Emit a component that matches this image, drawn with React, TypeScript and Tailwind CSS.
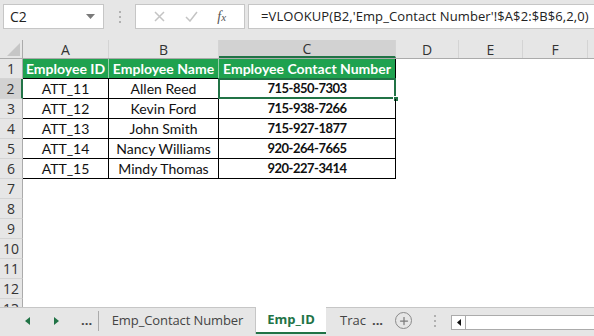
import { Plus } from 'lucide-react'

const cols = [
	{ key: 'A', w: 'w-[86px]' },
	{ key: 'B', w: 'w-[110px]' },
	{ key: 'C', w: 'w-[177px]' },
	{ key: 'D', w: 'w-[63px]' },
	{ key: 'E', w: 'w-[64px]' },
	{ key: 'F', w: 'w-[65px]' },
]

const rows = [
	['ATT_11', 'Allen Reed', '715-850-7303'],
	['ATT_12', 'Kevin Ford', '715-938-7266'],
	['ATT_13', 'John Smith', '715-927-1877'],
	['ATT_14', 'Nancy Williams', '920-264-7665'],
	['ATT_15', 'Mindy Thomas', '920-227-3414'],
]

const ui = { fontFamily: '"Open Sans", "Noto Sans", sans-serif' }
const cell = { fontFamily: 'Lato, "Noto Sans", sans-serif' }

function Dots() {
	return (
		<div className="flex flex-col gap-[3px]">
			<span className="w-[2px] h-[2px] bg-[#b0b0b0]" />
			<span className="w-[2px] h-[2px] bg-[#b0b0b0]" />
			<span className="w-[2px] h-[2px] bg-[#b0b0b0]" />
		</div>
	)
}

function TopBar() {
	return (
		<div className="h-[40px] bg-[#e6e6e6] flex items-start pt-[4px] pl-[3px] shrink-0" style={ui}>
			{/* Name box */}
			<div className="w-[101px] h-[25px] bg-white border border-[#c6c6c6] flex items-center justify-between pl-[6px] pr-[8px]">
				<span className="text-[14px] text-[#222]">C2</span>
				<svg width="9" height="5" viewBox="0 0 9 5">
					<path d="M0 0h9L4.5 5z" fill="#7a7a7a" />
				</svg>
			</div>
			<div className="w-[31px] h-[25px] flex items-center justify-center">
				<Dots />
			</div>
			{/* Formula buttons */}
			<div className="w-[110px] h-[25px] bg-white border border-[#c6c6c6] flex items-center justify-around px-[8px]">
				<svg width="11" height="11" viewBox="0 0 11 11">
					<path d="M1 1l9 9M10 1l-9 9" stroke="#c4c4c4" strokeWidth="1.5" />
				</svg>
				<svg width="13" height="11" viewBox="0 0 13 11">
					<path d="M1 6l4 4 7-9" stroke="#c4c4c4" strokeWidth="1.5" fill="none" />
				</svg>
				<span className="text-[14px] italic text-[#555]" style={{ fontFamily: '"Liberation Serif", serif' }}>
					f<span className="text-[11px]">x</span>
				</span>
			</div>
			{/* Formula box */}
			<div className="ml-[3px] flex-1 h-[25px] bg-white border border-[#c6c6c6] border-r-0 flex items-center pl-[12px] overflow-hidden whitespace-nowrap">
				<span className="text-[13px] text-[#222] tracking-[0.1px]">
					=VLOOKUP(B2,'Emp_Contact Number'!$A$2:$B$6,2,0)
				</span>
			</div>
		</div>
	)
}

function ColumnHeader() {
	return (
		<div className="h-[19px] flex shrink-0 bg-[#e6e6e6] border-b border-[#ababab]" style={ui}>
			<div className="w-[23px] border-r border-[#ababab] relative">
				<svg className="absolute right-[2px] bottom-[2px]" width="13" height="13" viewBox="0 0 13 13">
					<path d="M13 0v13H0z" fill="#c6c6c6" />
				</svg>
			</div>
			{cols.map((c) => (
				<div
					key={c.key}
					className={`${c.w} shrink-0 border-r border-[#d4d4d4] flex items-center justify-center text-[14px] text-[#333] ${
						c.key === 'C' ? 'bg-[#d2d2d2] border-b-2 border-b-[#217346]' : ''
					}`}
				>
					{c.key}
				</div>
			))}
			<div className="flex-1" />
		</div>
	)
}

function RowHead({ n, active }: { n: number; active?: boolean }) {
	return (
		<div
			className={`w-[23px] shrink-0 flex items-center justify-center text-[14px] text-[#333] border-b border-[#d4d4d4] ${
				active ? 'bg-[#d2d2d2] border-r-2 border-r-[#217346]' : 'bg-[#e6e6e6] border-r border-r-[#ababab]'
			}`}
			style={ui}
		>
			{n}
		</div>
	)
}

function Sheet() {
	return (
		<div className="flex-1 flex flex-col overflow-hidden bg-white">
			<ColumnHeader />
			{/* header row */}
			<div className="h-[20px] flex shrink-0">
				<RowHead n={1} />
				<div className="flex border-b border-black" style={cell}>
					{['Employee ID', 'Employee Name', 'Employee Contact Number'].map((t, i) => (
						<div
							key={t}
							className={`${cols[i].w} shrink-0 bg-[#1fa24f] text-white font-bold text-[14px] flex items-center justify-center whitespace-nowrap ${
								i < 2 ? 'border-r border-[#8fd1a7]' : 'border-r border-black'
							}`}
						>
							{t}
						</div>
					))}
				</div>
			</div>
			{rows.map((r, ri) => (
				<div key={r[0]} className="h-[20px] flex shrink-0">
					<RowHead n={ri + 2} active={ri === 0} />
					<div className="flex border-b border-black text-[14px] text-[#111]" style={cell}>
						<div className={`${cols[0].w} shrink-0 border-r border-black flex items-center justify-center`}>{r[0]}</div>
						<div className={`${cols[1].w} shrink-0 border-r border-black flex items-center justify-center`}>{r[1]}</div>
						<div
							className={`${cols[2].w} shrink-0 border-r border-black flex items-center justify-center font-bold text-[13px] tracking-[-0.5px] relative`}
						>
							{r[2]}
							{ri === 0 && (
								<>
									<div className="absolute inset-[-1px] border-2 border-[#217346]" />
									<div className="absolute right-[-4px] bottom-[-4px] w-[6px] h-[6px] bg-[#217346] border border-white" />
								</>
							)}
						</div>
					</div>
				</div>
			))}
			{[7, 8, 9, 10, 11, 12, 13].map((n) => (
				<div key={n} className="h-[20px] flex shrink-0">
					<RowHead n={n} />
				</div>
			))}
		</div>
	)
}

function TabBar() {
	return (
		<div className="h-[29px] shrink-0 bg-[#e6e6e6] border-t border-[#c6c6c6] flex items-start" style={ui}>
			<div className="w-[100px] h-[25px] flex items-center">
				<svg className="ml-[25px]" width="5" height="8" viewBox="0 0 5 8">
					<path d="M5 0v8L0 4z" fill="#217346" />
				</svg>
				<svg className="ml-[24px]" width="5" height="8" viewBox="0 0 5 8">
					<path d="M0 0v8l5-4z" fill="#217346" />
				</svg>
				<span className="ml-[22px] text-[13px] font-bold text-[#444] leading-none">...</span>
				<div className="ml-[6px] w-px h-[20px] bg-[#ababab]" />
			</div>
			<div className="w-[155px] h-[25px] flex items-center justify-center text-[13px] text-[#444] tracking-[-0.1px]">
				Emp_Contact Number
			</div>
			<div className="w-[71px] h-[27px] -mt-px bg-white flex flex-col items-center border-l border-[#c6c6c6]">
				<span className="flex-1 flex items-center text-[13px] font-bold text-[#217346]">Emp_ID</span>
				<div className="w-full h-[2px] bg-[#217346]" />
			</div>
			<div className="h-[25px] flex items-center pl-[14px]">
				<span className="text-[13px] text-[#444]">Trac</span>
				<span className="ml-[6px] text-[13px] font-bold text-[#444]">...</span>
				<div className="ml-[12px] w-[17px] h-[17px] rounded-full border border-[#8a8a8a] flex items-center justify-center">
					<Plus size={12} color="#7a7a7a" strokeWidth={2.5} />
				</div>
				<div className="ml-[22px]">
					<Dots />
				</div>
			</div>
			<div className="ml-[15px] mt-[7px] flex-1 h-[15px] bg-white border border-[#ababab] border-r-0 flex">
				<div className="w-[14px] h-full border-r border-[#ababab] flex items-center justify-center">
					<svg width="4" height="7" viewBox="0 0 4 7">
						<path d="M4 0v7L0 3.5z" fill="#111" />
					</svg>
				</div>
			</div>
		</div>
	)
}

export default function App() {
	return (
		<div className="w-[594px] h-[336px] flex flex-col overflow-hidden bg-white">
			<TopBar />
			<Sheet />
			<TabBar />
		</div>
	)
}
